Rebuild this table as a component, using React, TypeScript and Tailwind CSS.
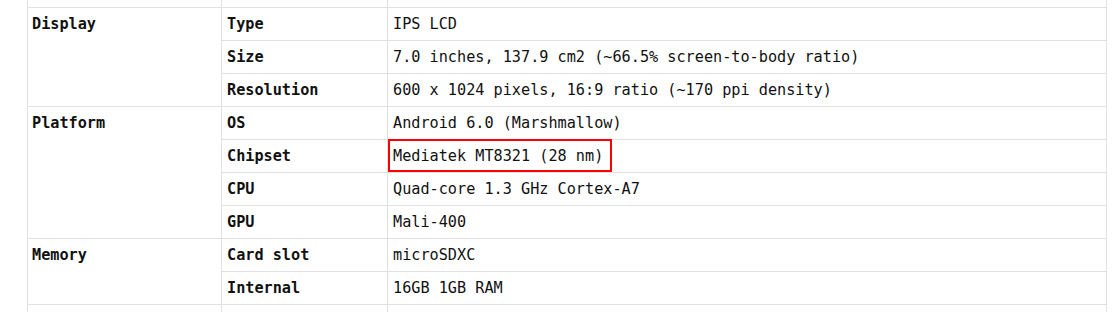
import React from "react";

type Row = { label: string; value: string; highlight?: boolean };
type Group = { name: string; rows: Row[] };

const groups: Group[] = [
  {
    name: "Display",
    rows: [
      { label: "Type", value: "IPS LCD" },
      { label: "Size", value: "7.0 inches, 137.9 cm2 (~66.5% screen-to-body ratio)" },
      { label: "Resolution", value: "600 x 1024 pixels, 16:9 ratio (~170 ppi density)" },
    ],
  },
  {
    name: "Platform",
    rows: [
      { label: "OS", value: "Android 6.0 (Marshmallow)" },
      { label: "Chipset", value: "Mediatek MT8321 (28 nm)", highlight: true },
      { label: "CPU", value: "Quad-core 1.3 GHz Cortex-A7" },
      { label: "GPU", value: "Mali-400" },
    ],
  },
  {
    name: "Memory",
    rows: [
      { label: "Card slot", value: "microSDXC" },
      { label: "Internal", value: "16GB 1GB RAM" },
    ],
  },
];

export default function App() {
  return (
    <div className="w-[1118px] h-[312px] overflow-hidden bg-white pl-[27px] text-[15.2px] text-[#111] font-['DejaVu_Sans_Mono','Liberation_Mono',monospace]">
      <table className="w-[1080px] table-fixed border-collapse">
        <colgroup>
          <col className="w-[194px]" />
          <col className="w-[166px]" />
          <col />
        </colgroup>
        <tbody>
          <tr className="h-[7px]">
            <td className="border-x border-b border-[#e1e1e1]" />
            <td className="border-x border-b border-[#e1e1e1]" />
            <td className="border-x border-b border-[#e1e1e1]" />
          </tr>
          {groups.map((g) =>
            g.rows.map((r, i) => (
              <tr key={g.name + r.label} className="h-[33px]">
                {i === 0 && (
                  <td
                    rowSpan={g.rows.length}
                    className="border border-[#e1e1e1] px-[4px] pt-[5px] align-top font-bold"
                  >
                    {g.name}
                  </td>
                )}
                <td className="border border-[#e1e1e1] px-[5px] pt-[2px] align-middle font-bold">{r.label}</td>
                <td className="border border-[#e1e1e1] px-[5px] pt-[2px] align-middle">
                  {r.highlight ? (
                    <span className="relative">
                      {r.value}
                      <span className="absolute -left-[5px] -right-[9px] -top-[8px] -bottom-[7px] border-2 border-[#f00]" />
                    </span>
                  ) : (
                    r.value
                  )}
                </td>
              </tr>
            ))
          )}
          <tr className="h-[33px]">
            <td className="border border-[#e1e1e1]" />
            <td className="border border-[#e1e1e1]" />
            <td className="border border-[#e1e1e1]" />
          </tr>
        </tbody>
      </table>
    </div>
  );
}
